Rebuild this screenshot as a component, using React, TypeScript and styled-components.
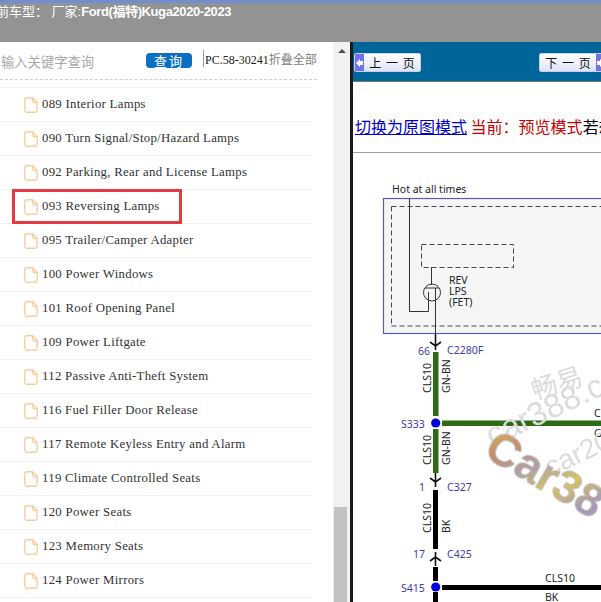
import * as React from 'react'

import styled, { createGlobalStyle } from 'styled-components'

const Global = createGlobalStyle`
  html, body {
    margin: 0;
    padding: 0;
    background: #fff;
    overflow: hidden;
  }
`

const Page = styled.div`
  width: 601px;
  height: 602px;
  overflow: hidden;
  display: flex;
  flex-direction: column;
  font-family: "Liberation Serif", "Noto Sans CJK SC", serif;
`

const Header = styled.div`
  height: 39px;
  flex: none;
  border-top: 3px solid #6f8fd0;
  background: #939393;
  overflow: hidden;
`

const Title = styled.div`
  margin: 0 0 0 -4px;
  font: 13px/18px "Liberation Sans", "Noto Sans CJK SC", sans-serif;
  color: #fff;
  white-space: nowrap;
`

const TitleStrong = styled.b`
  letter-spacing: -0.4px;
`

const Body = styled.div`
  flex: 1;
  min-height: 0;
  display: flex;
`

const Side = styled.div`
  width: 333px;
  flex: none;
  overflow: hidden;
`

const Search = styled.div`
  height: 29px;
  width: 317px;
  padding-top: 8px;
  display: flex;
  align-items: flex-start;
  border-bottom: 1px dashed #cfcfcf;
  box-sizing: content-box;
  font-family: "Noto Sans CJK SC", sans-serif;
`

const Keyword = styled.div`
  width: 146px;
  flex: none;
  margin-top: 3px;
  padding-left: 1px;
  box-sizing: border-box;
  font-size: 13.3px;
  line-height: 18px;
  color: #a8a8a8;
`

const QueryButton = styled.div`
  width: 46px;
  height: 15px;
  margin-top: 3px;
  flex: none;
  border-radius: 4px;
  background: #0b6fc4;
  color: #fff;
  font-size: 13px;
  line-height: 15px;
  letter-spacing: 2px;
  text-align: center;
`

const Code = styled.div`
  margin-left: 11px;
  height: 17px;
  padding-left: 1px;
  border-left: 1px solid #999;
  font: 12px/17px "Liberation Serif", serif;
  color: #222;
  white-space: nowrap;
`

const Fold = styled.span`
  font-family: "Noto Sans CJK SC", sans-serif;
  font-size: 12px;
  color: #7d7d7d;
`

const List = styled.div`
  width: 312px;
  margin-top: 7px;
  border-top: 1px solid #f3f3f3;
`

const Row = styled.div<{ $marked?: boolean }>`
  position: relative;
  height: 33px;
  border-bottom: 1px solid #f3f3f3;
  padding-left: 24px;
  display: flex;
  align-items: center;
  gap: 4px;
  font-size: 12.8px;
  letter-spacing: 0.28px;
  color: #333;
  white-space: nowrap;
  ${p =>
    p.$marked &&
    `
    &::after {
      content: '';
      position: absolute;
      left: 12px;
      top: -1px;
      width: 164px;
      height: 29px;
      border: 3px solid #e23a40;
    }
  `}
`

const Track = styled.div`
  width: 17px;
  flex: none;
  background: #f1f1f1;
  display: flex;
  flex-direction: column;
  justify-content: space-between;
  align-items: center;
`

const TrackArrow = styled.div`
  margin-top: 7px;
  width: 0;
  height: 0;
  border-left: 4px solid transparent;
  border-right: 4px solid transparent;
  border-bottom: 4px solid #505050;
`

const Thumb = styled.div`
  width: 13px;
  height: 95px;
  margin-right: 3px;
  background: #c1c1c1;
`

const Content = styled.div`
  flex: 1;
  min-width: 0;
  border-left: 3px solid #1a1a1a;
  overflow: hidden;
`

const NavBar = styled.div`
  height: 40px;
  padding: 11px 0 0 1px;
  box-sizing: border-box;
  border-bottom: 1px solid #777;
  background: #006699;
  display: flex;
  justify-content: space-between;
  overflow: hidden;
`

const PageButton = styled.div<{ $next?: boolean }>`
  width: 67px;
  height: 19px;
  flex: none;
  display: flex;
  flex-direction: ${p => (p.$next ? 'row-reverse' : 'row')};
  align-items: center;
  margin-right: ${p => (p.$next ? '-5px' : '0')};
  box-sizing: border-box;
  background: linear-gradient(#ffffff, #dfe2f8);
  border: 1px solid #c9cdf2;
  border-radius: 2px;
  font: 12px/17px "Noto Sans CJK SC", sans-serif;
  color: #111;
`

const ButtonLabel = styled.span`
  flex: 1;
  text-align: center;
  word-spacing: 2px;
  white-space: nowrap;
`

const ButtonIcon = styled.span`
  width: 9px;
  align-self: stretch;
  flex: none;
  background: #6f74e8;
  color: #fff;
  display: flex;
  align-items: center;
  justify-content: center;
`

const Notice = styled.div`
  height: 71px;
  padding: 32px 0 0 2px;
  box-sizing: border-box;
  border-bottom: 1px solid #a0a0a0;
  font: 16px/24px "Noto Sans CJK SC", sans-serif;
  white-space: nowrap;
  color: #000;
  overflow: hidden;
`

const ModeLink = styled.a`
  color: #0000c8;
  text-decoration: underline;
`

const ModeText = styled.span`
  color: #c80000;
`

const Diagram = styled.svg`
  display: block;
  margin-top: 27px;
`

const FileIcon = () => (
  <svg width="14" height="16" viewBox="0 0 14 16" fill="none" stroke="#f5cfa0" strokeWidth="1.4">
    <path d="M3 .8h5.5l4.7 4.7V13a2.2 2.2 0 0 1-2.2 2.2H3A2.2 2.2 0 0 1 .8 13V3A2.2 2.2 0 0 1 3 .8z" />
    <path d="M8.5 .8v3a1.7 1.7 0 0 0 1.7 1.7h3" />
  </svg>
)

const items = [
  '089 Interior Lamps',
  '090 Turn Signal/Stop/Hazard Lamps',
  '092 Parking, Rear and License Lamps',
  '093 Reversing Lamps',
  '095 Trailer/Camper Adapter',
  '100 Power Windows',
  '101 Roof Opening Panel',
  '109 Power Liftgate',
  '112 Passive Anti-Theft System',
  '116 Fuel Filler Door Release',
  '117 Remote Keyless Entry and Alarm',
  '119 Climate Controlled Seats',
  '120 Power Seats',
  '123 Memory Seats',
  '124 Power Mirrors',
]

const blue = '#3c3cae'
const sans = '"Noto Sans", sans-serif'

const Label = ({ x, y, c = '#222', children }: { x: number; y: number; c?: string; children: React.ReactNode }) => (
  <text x={x} y={y} fill={c} fontSize={10.5} fontFamily={sans}>
    {children}
  </text>
)

const Vertical = ({ x, y, children }: { x: number; y: number; children: React.ReactNode }) => (
  <text x={x} y={y} fill="#222" fontSize={10.5} fontFamily={sans} transform={`rotate(-90 ${x} ${y})`}>
    {children}
  </text>
)

const WiringDiagram = () => (
  <Diagram width="248" height="422" viewBox="353 180 248 422">
    <defs>
      <linearGradient id="mark" x1="0" y1="0" x2="1" y2="0.3">
        <stop offset="0" stopColor="#d9c14e" />
        <stop offset="0.25" stopColor="#c88d6a" />
        <stop offset="0.5" stopColor="#b0a0a8" />
        <stop offset="0.75" stopColor="#d8c45a" />
        <stop offset="1" stopColor="#a898b8" />
      </linearGradient>
      <filter id="soft">
        <feGaussianBlur stdDeviation="0.5" />
      </filter>
    </defs>

    <Label x={392} y={193}>Hot at all times</Label>
    <rect x="383.5" y="198.5" width="240" height="135" fill="#f5f5f5" stroke="#5a5ac0" strokeWidth="1.2" />
    <path d="M391.5 206.5H620M391.5 206.5V326M391.5 326H620" fill="none" stroke="#444" strokeDasharray="5 3" />
    <rect x="421.5" y="244.5" width="92" height="23" fill="none" stroke="#444" strokeDasharray="5 3" />
    <path d="M409.5 198V311.5H428.5V292" fill="none" stroke="#333" />
    <path d="M431.5 267V285M425 288H439M435.5 288V345" fill="none" stroke="#333" />
    <circle cx="432" cy="292.5" r="8.5" fill="none" stroke="#333" />
    <Label x={449} y={284}>REV</Label>
    <Label x={449} y={295}>LPS</Label>
    <Label x={449} y={306}>(FET)</Label>

    <path d="M430 342L435.5 346L441 342M435.5 334V350" fill="none" stroke="#111" strokeWidth="1.6" />
    <Label x={418} y={355} c={blue}>66</Label>
    <Label x={447} y={354} c={blue}>C2280F</Label>

    <rect x="433" y="352" width="5.5" height="64" fill="#2f6a14" />
    <rect x="433" y="429" width="5.5" height="44" fill="#2f6a14" />
    <rect x="442" y="420.5" width="165" height="5.5" fill="#2f6a14" />
    <Vertical x={431} y={393}>CLS10</Vertical>
    <Vertical x={450} y={393}>GN-BN</Vertical>
    <Vertical x={431} y={465}>CLS10</Vertical>
    <Vertical x={450} y={465}>GN-BN</Vertical>
    <circle cx="435.7" cy="423" r="4.6" fill="#0000dd" />
    <Label x={401} y={428} c={blue}>S333</Label>
    <Label x={594} y={417}>C</Label>
    <Label x={594} y={437}>G</Label>

    <path d="M430 478L435.5 482L441 478M435.5 473V487" fill="none" stroke="#111" strokeWidth="1.6" />
    <Label x={419} y={491} c={blue}>1</Label>
    <Label x={447} y={491} c={blue}>C327</Label>
    <rect x="433" y="490" width="5" height="59" fill="#000" />
    <Vertical x={431} y={533}>CLS10</Vertical>
    <Vertical x={450} y={533}>BK</Vertical>

    <Label x={413} y={558} c={blue}>17</Label>
    <Label x={447} y={558} c={blue}>C425</Label>
    <path d="M430 561L435.5 557L441 561M435.5 552V566" fill="none" stroke="#111" strokeWidth="1.6" />
    <rect x="433" y="567" width="5" height="14" fill="#000" />
    <rect x="433" y="592" width="5" height="12" fill="#000" />
    <rect x="442" y="585" width="165" height="5" fill="#000" />
    <circle cx="435.7" cy="587" r="4.6" fill="#0000dd" />
    <Label x={401} y={592} c={blue}>S415</Label>
    <Label x={545} y={582}>CLS10</Label>
    <Label x={545} y={601}>BK</Label>

    <g fontFamily="'Noto Sans CJK SC', sans-serif" fill="#dcdcdc">
      <text x="535" y="400" fontSize="26" transform="rotate(-18 535 400)">畅易</text>
    </g>
    <g fontFamily="'Liberation Sans', sans-serif" fill="#dcdcdc" filter="url(#soft)">
      <text x="492" y="447" fontSize="33" transform="rotate(-25 492 447)">car388.c</text>
      <text x="550" y="477" fontSize="28" transform="rotate(-25 550 477)">car201</text>
    </g>
    <text
      x="482"
      y="456"
      fontSize="46"
      fontWeight="bold"
      fontFamily="'Liberation Sans', sans-serif"
      fill="url(#mark)"
      stroke="#b8b8b8"
      strokeWidth="0.8"
      filter="url(#soft)"
      transform="rotate(30 482 456)"
    >
      Car38
    </text>
  </Diagram>
)

const App = () => (
  <Page>
    <Global />
    <Header>
      <Title>
        前车型： 厂家:<TitleStrong>Ford(福特)Kuga2020-2023</TitleStrong>
      </Title>
    </Header>
    <Body>
      <Side>
        <Search>
          <Keyword>输入关键字查询</Keyword>
          <QueryButton>查询</QueryButton>
          <Code>
            PC.58-30241<Fold>折叠全部</Fold>
          </Code>
        </Search>
        <List>
          {items.map((item, i) => (
            <Row key={item} $marked={i === 3}>
              <FileIcon />
              {item}
            </Row>
          ))}
        </List>
      </Side>
      <Track>
        <TrackArrow />
        <Thumb />
      </Track>
      <Content>
        <NavBar>
          <PageButton>
            <ButtonIcon>
              <svg width="7" height="8" viewBox="0 0 7 8"><path d="M0 4L4 0V2H7V6H4V8z" fill="#fff" /></svg>
            </ButtonIcon>
            <ButtonLabel>上 一 页</ButtonLabel>
          </PageButton>
          <PageButton $next>
            <ButtonIcon>
              <svg width="7" height="8" viewBox="0 0 7 8"><path d="M7 4L3 0V2H0V6H3V8z" fill="#fff" /></svg>
            </ButtonIcon>
            <ButtonLabel>下 一 页</ButtonLabel>
          </PageButton>
        </NavBar>
        <Notice>
          <ModeLink href="#">切换为原图模式</ModeLink> <ModeText>当前：预览模式</ModeText>若想查看高清原图请切换
        </Notice>
        <WiringDiagram />
      </Content>
    </Body>
  </Page>
)

export default App
